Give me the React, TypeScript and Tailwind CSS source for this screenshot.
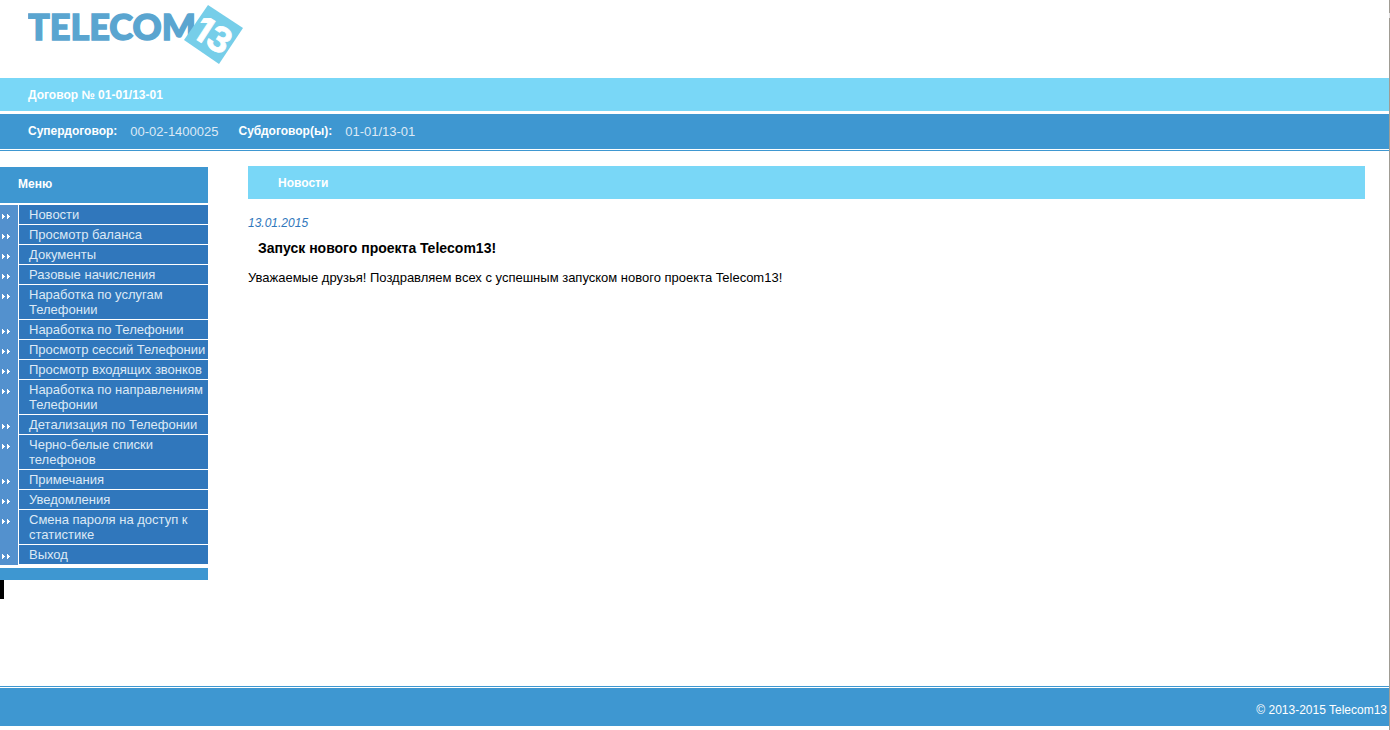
const menuItems = [
  'Новости',
  'Просмотр баланса',
  'Документы',
  'Разовые начисления',
  'Наработка по услугам Телефонии',
  'Наработка по Телефонии',
  'Просмотр сессий Телефонии',
  'Просмотр входящих звонков',
  'Наработка по направлениям Телефонии',
  'Детализация по Телефонии',
  'Черно-белые списки телефонов',
  'Примечания',
  'Уведомления',
  'Смена пароля на доступ к статистике',
  'Выход',
];

function Logo() {
  return (
    <svg width="220" height="66" viewBox="0 0 220 66" role="img" aria-label="Telecom13">
      <text x="0" y="40" fill="#5aa5d0" stroke="#5aa5d0" strokeWidth="1.4" className="font-['Lato'] text-[36px] font-black">
        TELECOM
      </text>
      <path d="M180 5 L215 28 L191 64 L156 40 Z" fill="#76cee9" />
      <g transform="translate(185.5 35) rotate(33)">
        <text x="0" y="13" textAnchor="middle" fill="#ffffff" stroke="#ffffff" strokeWidth="0.8" className="font-['Inter'] text-[35px] font-bold">
          13
        </text>
      </g>
    </svg>
  );
}

function Arrows() {
  return (
    <svg width="8" height="5" viewBox="0 0 8 5" fill="#ffffff" shapeRendering="crispEdges" aria-hidden="true">
      <path d="M0 0h1v1h1v1h1v1h-1v1h-1v1h-1z" />
      <path d="M5 0h1v1h1v1h1v1h-1v1h-1v1h-1z" />
    </svg>
  );
}

function Sidebar() {
  return (
    <aside className="mt-px w-[208px] shrink-0">
      <h2 className="mb-0.5 bg-[#3e97d1] pt-2.5 pb-[11px] pl-[18px] text-[12px] leading-[15px] font-bold text-white">
        Меню
      </h2>
      <nav>
        <ul>
          {menuItems.map((item) => (
            <li key={item} className="flex">
              <span className="w-[18px] shrink-0 bg-[#5391ce] pt-[9px] pl-0.5">
                <Arrows />
              </span>
              <a
                href="#"
                className="mb-px ml-px flex-1 bg-[#3077bc] pt-0.5 pb-0.5 pl-2.5 text-[13px] leading-[15px] text-[#dde9f5] hover:text-white"
              >
                {item}
              </a>
            </li>
          ))}
        </ul>
      </nav>
      <div className="mt-[3px] h-3 bg-[#3e97d1]" />
      <div className="h-[19px] w-1 bg-black" />
    </aside>
  );
}

export default function App() {
  return (
    <div className="flex min-h-screen bg-white font-['Liberation_Sans',Arial,sans-serif] text-black">
      <div className="flex min-w-0 flex-1 flex-col">
        <header>
          <div className="h-[78px] pl-7">
            <Logo />
          </div>
          <div className="mb-[3px] bg-[#79d7f7] pt-2.5 pb-2 pl-7 text-[12px] leading-[15px] font-bold text-white">
            Договор № 01-01/13-01
          </div>
          <dl className="flex bg-[#3e97d1] py-2.5 pl-7 text-[13px] leading-[15px] text-[#dde9f5]">
            <dt className="text-[12px] font-bold text-white">Супердоговор:</dt>
            <dd className="mr-5 ml-[13px]">00-02-1400025</dd>
            <dt className="text-[12px] font-bold text-white">Субдоговор(ы):</dt>
            <dd className="ml-[13px]">01-01/13-01</dd>
          </dl>
          <div className="mt-px h-px bg-[#3e97d1]" />
        </header>

        <div className="flex flex-1 pt-[15px]">
          <Sidebar />
          <main className="mr-6 ml-10 min-w-0 flex-1">
            <h1 className="bg-[#79d7f7] pt-2.5 pb-2 pl-[30px] text-[12px] leading-[15px] font-bold text-white">
              Новости
            </h1>
            <article className="pt-[17px]">
              <time dateTime="2015-01-13" className="block text-[12px] leading-[15px] text-[#3077bc] italic">
                13.01.2015
              </time>
              <h3 className="mt-2.5 ml-2.5 text-[14px] leading-[15px] font-bold">
                Запуск нового проекта Telecom13!
              </h3>
              <p className="mt-3.5 text-[13px] leading-[15px]">
                Уважаемые друзья! Поздравляем всех с успешным запуском нового проекта Telecom13!
              </p>
            </article>
          </main>
        </div>

        <footer className="mb-1">
          <div className="mb-px h-px bg-[#3e97d1]" />
          <p className="bg-[#3e97d1] pt-[15px] pr-0.5 pb-2 text-right text-[12px] leading-[15px] text-white">
            © 2013-2015 Telecom13
          </p>
        </footer>
      </div>

      {/* right window edge */}
      <div className="flex w-px shrink-0 flex-col bg-[#a09c94]">
        <div className="mt-[13px] h-[5px] bg-[#e4e4e4]" />
      </div>
    </div>
  );
}
